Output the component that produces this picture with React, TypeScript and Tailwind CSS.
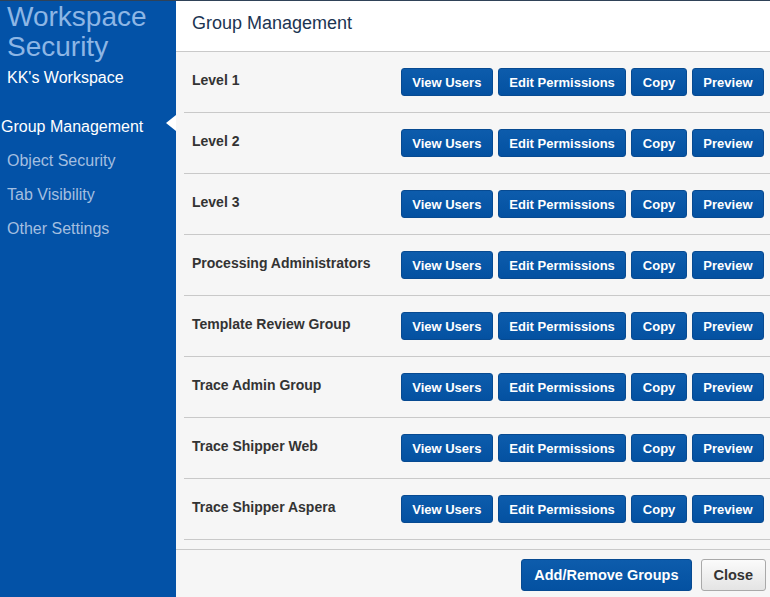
import React from "react";

const groups = [
  "Level 1",
  "Level 2",
  "Level 3",
  "Processing Administrators",
  "Template Review Group",
  "Trace Admin Group",
  "Trace Shipper Web",
  "Trace Shipper Aspera",
];

const actions = ["View Users", "Edit Permissions", "Copy", "Preview"];

function BlueButton({ label }: { label: string }) {
  return (
    <button className="h-[28px] px-[10.5px] rounded-[3px] border border-[#074a91] bg-gradient-to-b from-[#0d5cac] to-[#0451a1] text-white text-[13px] font-bold leading-none whitespace-nowrap">
      {label}
    </button>
  );
}

export default function App() {
  return (
    <div
      className="w-[770px] h-[597px] flex flex-col overflow-hidden bg-[#f6f6f6]"
      style={{ fontFamily: '"Liberation Sans", Arial, Helvetica, sans-serif' }}
    >
      <div className="h-px bg-[#2f4258] shrink-0" />
      <div className="flex flex-1 min-h-0">
        {/* Sidebar */}
        <aside className="relative w-[176px] shrink-0 bg-[#0352a7] flex flex-col">
          <div className="pl-[7px] pt-[1px] text-[28px] leading-[30px] text-[#8db6e5]">
            <div>Workspace</div>
            <div>Security</div>
          </div>
          <div className="pl-[7px] mt-[6px] text-[16px] leading-[20px] text-white">KK's Workspace</div>
          <nav className="mt-[22px] flex flex-col text-[16px] leading-[34px]">
            <div className="pl-[1px] text-white">Group Management</div>
            <div className="pl-[7px] text-[#a3bfe0]">Object Security</div>
            <div className="pl-[7px] text-[#a3bfe0]">Tab Visibility</div>
            <div className="pl-[7px] text-[#a3bfe0]">Other Settings</div>
          </nav>
          <div className="absolute right-0 top-[114px] w-0 h-0 border-y-[8px] border-y-transparent border-r-[10px] border-r-white" />
        </aside>

        {/* Main */}
        <main className="flex-1 flex flex-col min-w-0">
          <header className="h-[51px] shrink-0 bg-white border-b border-[#c9c9c9] pl-[16px] pt-[11px]">
            <h1 className="text-[18px] leading-[22px] text-[#1b3452]">Group Management</h1>
          </header>
          <div className="flex-1 min-h-0 pl-[8px]">
            {groups.map((g) => (
              <div
                key={g}
                className="h-[61px] border-b border-[#c9c9c9] flex items-center justify-between pl-[8px] pr-[6px]"
              >
                <span className="-mt-[3px] text-[14px] font-bold text-[#333333]">{g}</span>
                <div className="flex gap-[5px]">
                  {actions.map((a) => (
                    <BlueButton key={a} label={a} />
                  ))}
                </div>
              </div>
            ))}
          </div>
          <footer className="h-[48px] shrink-0 border-t border-[#c9c9c9] flex justify-end items-start gap-[9px] pt-[9px] pr-[4px]">
            <button className="h-[32px] px-[12px] rounded-[3px] border border-[#074a91] bg-gradient-to-b from-[#0d5cac] to-[#0451a1] text-white text-[14.5px] font-bold leading-none whitespace-nowrap">
              Add/Remove Groups
            </button>
            <button className="h-[32px] px-[12px] rounded-[3px] border border-[#a9a9a9] bg-gradient-to-b from-[#fbfbfb] to-[#e4e4e4] text-[#333333] text-[14.5px] font-bold leading-none whitespace-nowrap">
              Close
            </button>
          </footer>
        </main>
      </div>
    </div>
  );
}
